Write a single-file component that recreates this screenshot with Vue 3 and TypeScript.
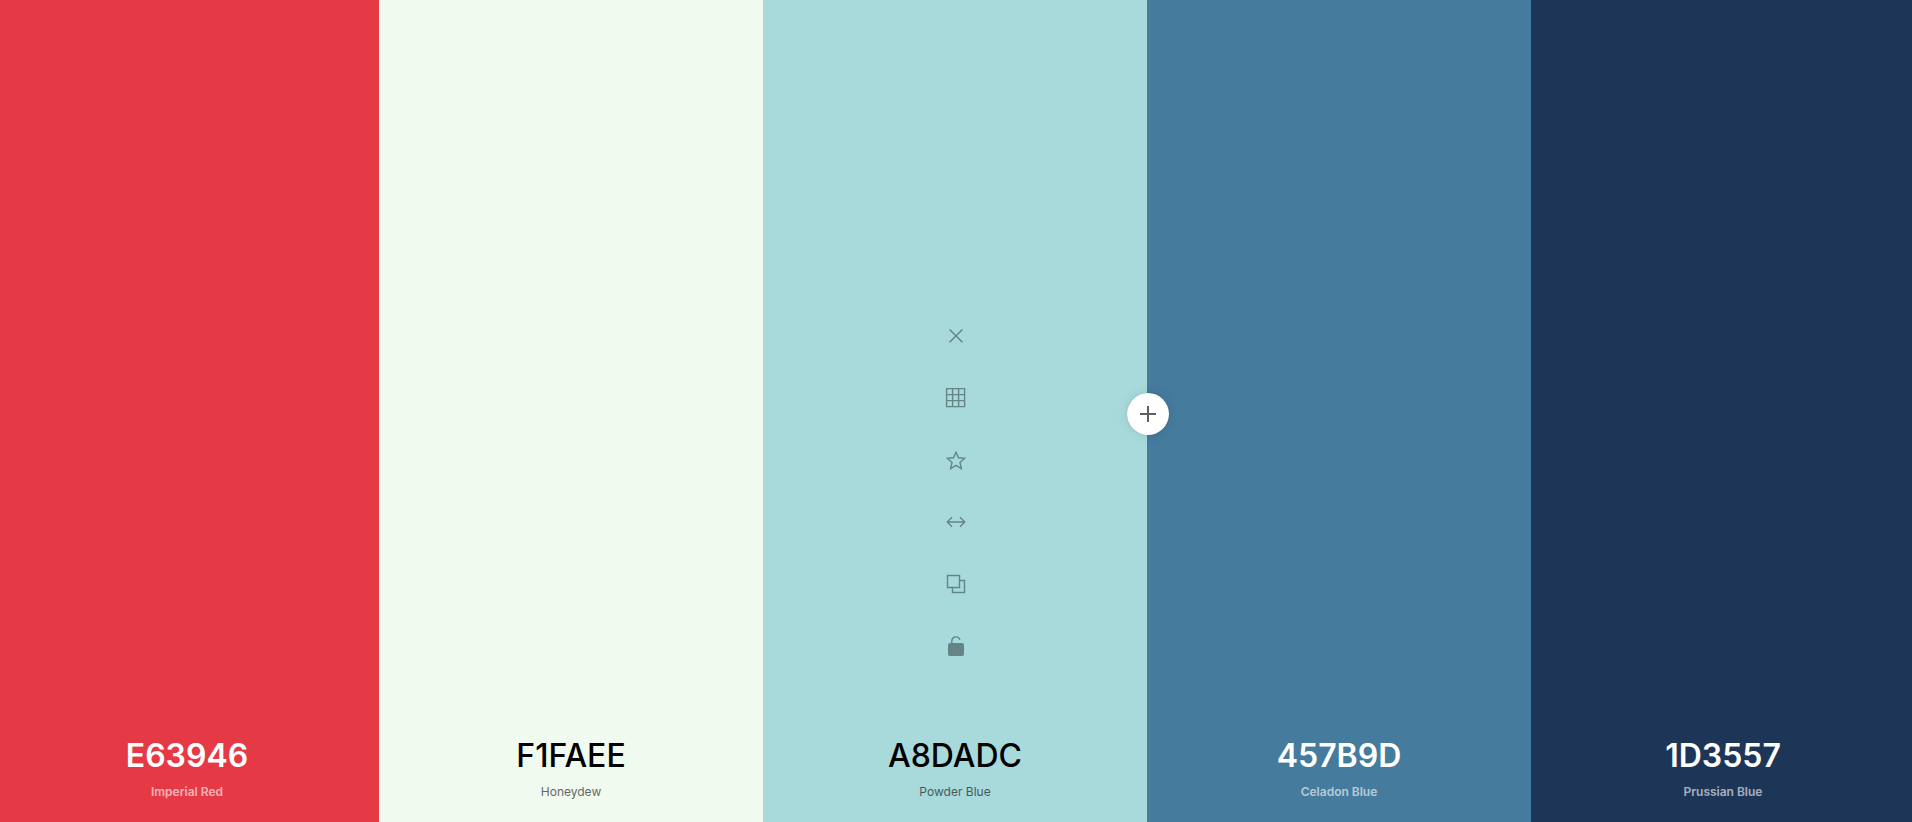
<script setup lang="ts">
import { ref } from 'vue'

interface Swatch {
  hex: string
  name: string
  tone: 'light' | 'dark'
}

const swatches = ref<Swatch[]>([
  { hex: 'E63946', name: 'Imperial Red', tone: 'light' },
  { hex: 'F1FAEE', name: 'Honeydew', tone: 'dark' },
  { hex: 'A8DADC', name: 'Powder Blue', tone: 'dark' },
  { hex: '457B9D', name: 'Celadon Blue', tone: 'light' },
  { hex: '1D3557', name: 'Prussian Blue', tone: 'light' },
])

const active = ref(2)
</script>

<template>
  <main class="palette">
    <section
      v-for="(swatch, index) in swatches"
      :key="swatch.hex"
      class="column"
      :class="swatch.tone"
      :style="{ backgroundColor: '#' + swatch.hex }"
    >
      <div v-if="index === active" class="tools">
        <button type="button" class="tool" aria-label="Remove color">
          <svg viewBox="-1 0 20 20"><path d="M3.6 3.500 16.400 16.300M16.400 3.500 3.600 16.300" /></svg>
        </button>
        <button type="button" class="tool" aria-label="View shades">
          <svg viewBox="-1 0 20 20"><path d="M.6.600h18v18H.6zM.6 6.600h18M.6 12.600h18M6.600.6v18M12.600.6v18" /></svg>
        </button>
        <button type="button" class="tool" aria-label="Save color">
          <svg viewBox="-1 0 20 20"><path d="m10 2.200 2.500 5.600 6.100.6-4.600 4.100 1.300 6-5.300-3.100-5.300 3.100 1.300-6-4.600-4.100 6.100-.6z" /></svg>
        </button>
        <button type="button" class="tool" aria-label="Drag color">
          <svg viewBox="-1 0 20 20"><path d="M1.500 10h17M6 5.300 1.300 10 6 14.700M14 5.300 18.700 10 14 14.700" /></svg>
        </button>
        <button type="button" class="tool" aria-label="Copy color">
          <svg viewBox="-1 0 20 20"><path d="M1.500 1.500h12v12h-12zM13.500 6.500h5v12h-12v-5" /></svg>
        </button>
        <button type="button" class="tool" aria-label="Lock color">
          <svg viewBox="-1 0 20 20">
            <path d="M5.800 8V5.100C5.800 2.400 7.700.9 10 .9c1.900 0 3.300.9 4 2.900" />
            <rect class="solid" x="2" y="7" width="16" height="13" rx="2" />
          </svg>
        </button>
      </div>
      <div class="info">
        <button type="button" class="hex">{{ swatch.hex }}</button>
        <button type="button" class="name">{{ swatch.name }}</button>
      </div>
      <button v-if="index === active" type="button" class="add" aria-label="Add color">
        <svg viewBox="0 0 16 16"><path d="M8 0v16M0 8h16" /></svg>
      </button>
    </section>
  </main>
</template>

<style>
body {
  overflow-x: hidden;
}
</style>

<style scoped>
.palette {
  display: grid;
  grid-template-columns: repeat(5, 1fr);
  min-height: 100vh;
  margin: 0 -3px 0 -5px;
  font-family: Inter, "Liberation Sans", sans-serif;
}

.column {
  position: relative;
  display: flex;
  flex-direction: column;
  align-items: center;
  justify-content: flex-end;
}

.light {
  color: #fff;
}

.dark {
  color: #000;
}

button {
  padding: 0;
  border: 0;
  background: none;
  color: inherit;
  font-family: inherit;
  cursor: pointer;
}

.tools {
  display: flex;
  flex-direction: column;
  margin-bottom: 59px;
  color: #658486;
}

.tool {
  display: grid;
  place-items: center;
  width: 62px;
  height: 62px;
}

.tool svg {
  width: 20px;
  height: 20px;
}

svg {
  display: block;
  overflow: visible;
  fill: none;
  stroke: currentColor;
  stroke-width: 1.4;
}

.solid {
  fill: currentColor;
  stroke: none;
}

.info {
  display: flex;
  flex-direction: column;
  align-items: center;
  gap: 8px;
  padding-bottom: 22px;
}

.hex {
  font-size: 32px;
  font-weight: 600;
  line-height: 40px;
}

.name {
  font-size: 12px;
  font-weight: 600;
  line-height: 16px;
  opacity: 0.6;
}

.dark .hex {
  font-weight: 500;
}

.dark .name {
  font-weight: 400;
}

.add {
  position: absolute;
  z-index: 1;
  top: 50%;
  right: 0;
  display: grid;
  place-items: center;
  width: 42px;
  height: 42px;
  border-radius: 50%;
  background: #fff;
  color: #5f6065;
  box-shadow: 0 0 1px rgba(0, 0, 0, 0.3), 0 0 12px rgba(0, 0, 0, 0.1);
  transform: translate(22px, -18px);
}

.add svg {
  width: 16px;
  height: 16px;
  stroke-width: 2;
}
</style>
